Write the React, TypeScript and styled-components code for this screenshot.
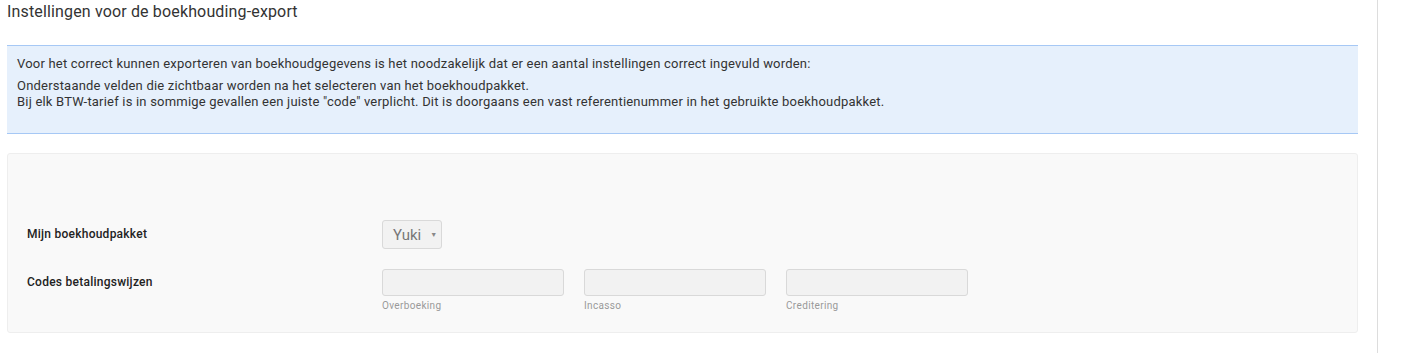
import styled, { createGlobalStyle } from "styled-components";

// style
const GlobalStyle = createGlobalStyle`
  html, body {
    margin: 0;
    padding: 0;
    background: #fff;
    font-family: Roboto, "Liberation Sans", sans-serif;
    color: #333;
  }
`;
const Page = styled.div`
  display: flex;
  width: 1406px;
  height: 356px;
  box-sizing: border-box;
`;
const Main = styled.main`
  width: 1351px;
  padding: 0 0 0 7px;
`;
const Divider = styled.div`
  width: 1px;
  height: 353px;
  margin-left: 19px;
  background: #ddd;
`;
const Title = styled.h1`
  margin: 0;
  padding-top: 3px;
  height: 45px;
  box-sizing: border-box;
  font-size: 16px;
  font-weight: 400;
  letter-spacing: 0.15px;
  line-height: 18px;
  color: #333;
`;
const InfoBox = styled.div`
  height: 89px;
  box-sizing: border-box;
  padding: 10px 10px 0;
  background: #e6f0fc;
  border-top: 1px solid #a6c8f5;
  border-bottom: 1px solid #a6c8f5;
  font-size: 13px;
  letter-spacing: 0.2px;
  line-height: 16px;
  color: #333;
  p {
    margin: 0 0 6px;
  }
`;
const Panel = styled.section`
  margin-top: 19px;
  height: 180px;
  box-sizing: border-box;
  padding: 66px 19px 0;
  background: #f9f9f9;
  border: 1px solid #eee;
  border-radius: 3px;
`;
const Row = styled.div<{ $gap: number }>`
  display: grid;
  grid-template-columns: 355px auto;
  margin-bottom: ${(p) => p.$gap}px;
`;
const Label = styled.label<{ $top: number }>`
  padding-top: ${(p) => p.$top}px;
  font-size: 12px;
  font-weight: 500;
  letter-spacing: 0.25px;
  color: #222;
`;
const Select = styled.div`
  display: flex;
  align-items: center;
  gap: 9px;
  width: 60px;
  height: 29px;
  box-sizing: border-box;
  padding: 0 10px;
  background: #f2f2f2;
  border: 1px solid #d9d9d9;
  border-radius: 3px;
  font-size: 15px;
  color: #777;
  span {
    font-size: 7px;
    color: #888;
  }
`;
const Fields = styled.div`
  display: flex;
  gap: 20px;
`;
const Field = styled.div`
  display: flex;
  flex-direction: column;
  width: 182px;
`;
const Input = styled.div`
  height: 27px;
  box-sizing: border-box;
  background: #f2f2f2;
  border: 1px solid #d9d9d9;
  border-radius: 3px;
`;
const Hint = styled.span`
  margin-top: 4px;
  font-size: 10px;
  letter-spacing: 0.35px;
  line-height: 12px;
  color: #999;
`;

// content
const codes = ["Overboeking", "Incasso", "Creditering"];

const App = () => {
  return (
    <>
      <GlobalStyle />
      <Page>
        <Main>
          <Title>Instellingen voor de boekhouding-export</Title>
          <InfoBox>
            <p>
              Voor het correct kunnen exporteren van boekhoudgegevens is het noodzakelijk dat er een aantal
              instellingen correct ingevuld worden:
            </p>
            <p>
              Onderstaande velden die zichtbaar worden na het selecteren van het boekhoudpakket.
              <br />
              Bij elk BTW-tarief is in sommige gevallen een juiste "code" verplicht. Dit is doorgaans een vast
              referentienummer in het gebruikte boekhoudpakket.
            </p>
          </InfoBox>
          <Panel>
            <Row $gap={20}>
              <Label $top={7}>Mijn boekhoudpakket</Label>
              <Select>
                Yuki <span>▼</span>
              </Select>
            </Row>
            <Row $gap={0}>
              <Label $top={6}>Codes betalingswijzen</Label>
              <Fields>
                {codes.map((code) => (
                  <Field key={code}>
                    <Input />
                    <Hint>{code}</Hint>
                  </Field>
                ))}
              </Fields>
            </Row>
          </Panel>
        </Main>
        <Divider />
      </Page>
    </>
  );
};

export default App;
